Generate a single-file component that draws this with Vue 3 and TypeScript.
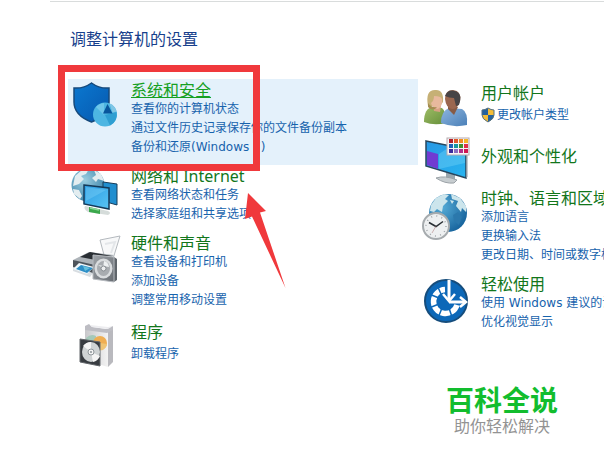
<script setup lang="ts">
interface Category {
  icon: string
  title: string
  links: string[]
  active?: boolean
  shield?: boolean
}

const columns: Category[][] = [
  [
    {
      icon: 'security',
      title: '系统和安全',
      links: ['查看你的计算机状态', '通过文件历史记录保存你的文件备份副本', '备份和还原(Windows 7)'],
      active: true,
    },
    { icon: 'network', title: '网络和 Internet', links: ['查看网络状态和任务', '选择家庭组和共享选项'] },
    { icon: 'hardware', title: '硬件和声音', links: ['查看设备和打印机', '添加设备', '调整常用移动设置'] },
    { icon: 'programs', title: '程序', links: ['卸载程序'] },
  ],
  [
    { icon: 'users', title: '用户帐户', links: ['更改帐户类型'], shield: true },
    { icon: 'display', title: '外观和个性化', links: [] },
    { icon: 'clock', title: '时钟、语言和区域', links: ['添加语言', '更换输入法', '更改日期、时间或数字格式'] },
    { icon: 'ease', title: '轻松使用', links: ['使用 Windows 建议的设置', '优化视觉显示'] },
  ],
]

const swatches: string[] = [
  '#b3202c', '#e0592a', '#f08a24', '#f5b526',
  '#1e62b8', '#1796a0', '#3f8f2c', '#e0304a',
  '#3b2a9c', '#8a6fc0', '#b0308c', '#d01850',
]
</script>

<template>
  <main class="page">
    <h1 class="heading">调整计算机的设置</h1>
    <div class="columns">
      <div v-for="(column, c) in columns" :key="c" class="column">
        <section
          v-for="item in column"
          :key="item.icon"
          class="category"
          :class="[item.icon, { active: item.active }]"
        >
          <svg v-if="item.icon === 'security'" class="icon" viewBox="0 0 48 48" aria-hidden="true">
            <defs>
              <linearGradient id="shieldFill" x1="0" y1="0" x2="1" y2="1">
                <stop offset="0" stop-color="#0a78d0" />
                <stop offset="1" stop-color="#0758ae" />
              </linearGradient>
            </defs>
            <path d="M20.500 1C26 5 31 6.500 38 6v14c0 9-7 16-17.500 20C10 36 3 29 3 20V6c7 .5 12-1 17.500-5z" fill="url(#shieldFill)" stroke="#164a7c" stroke-width="1.500" />
            <circle cx="34" cy="32.500" r="12" fill="#4db6e2" />
            <path d="M34 33 45.500 30A12 12 0 0 1 39 43.500z" fill="#2f9fd2" />
            <path d="M25 25a12 12 0 0 1 8-4v12z" fill="#6fc6ea" />
            <path d="M32 31.500 36.500 22l5 9.500z" fill="#08569c" />
            <path d="M38.500 21.500a12 12 0 0 1 7 8l-4 1z" fill="#80c6e5" />
          </svg>

          <svg v-else-if="item.icon === 'network'" class="icon" viewBox="0 0 48 48" aria-hidden="true">
            <defs>
              <radialGradient id="netGlobe" cx=".4" cy=".35" r=".7">
                <stop offset="0" stop-color="#9bcde0" />
                <stop offset="1" stop-color="#3a82a8" />
              </radialGradient>
              <linearGradient id="netScreen" x1="0" y1="0" x2="1" y2="1">
                <stop offset="0" stop-color="#2b9be2" />
                <stop offset="1" stop-color="#58c4f4" />
              </linearGradient>
            </defs>
            <circle cx="17" cy="17" r="16.500" fill="url(#netGlobe)" />
            <path d="M4 8l7-6 7-1-3 5-5 2 3 3-5 5-6 2zM23 2l7 4 3 7-6-2-2 3-4-4 4-3zM2 21l6 1 3 6-2 3-6-5z" fill="#e3edf0" />
            <path d="M32 14l14 2v21l-14-4z" fill="#208ecf" stroke="#173c59" />
            <path d="M13 17l25 3v21l-25-5z" fill="url(#netScreen)" stroke="#143a59" stroke-width="1.500" />
            <path d="M15 19l20 3-20 11z" fill="#7fd3f7" opacity=".4" />
            <path d="M14 38l23 5q4 2 0 4l-20-3q-5-3-3-6z" fill="#d5dcda" />
            <path d="M18 39l11 2.500v4.500l-11-2z" fill="#3ba84c" />
            <path d="M19 40l9 2" stroke="#8ed699" stroke-width="1.500" />
          </svg>

          <svg v-else-if="item.icon === 'hardware'" class="icon" viewBox="0 0 48 48" aria-hidden="true">
            <defs>
              <linearGradient id="speaker" x1="0" y1="0" x2="1" y2="1">
                <stop offset="0" stop-color="#9ea3a8" />
                <stop offset="1" stop-color="#686d73" />
              </linearGradient>
            </defs>
            <path d="M29 5 49 1 42 24 33 20z" fill="#f7f8f9" stroke="#b4b9be" />
            <path d="M34 9l10-2-4 11" fill="none" stroke="#e3e6e9" stroke-width="2" />
            <path d="M2 25 18 17 43 20 24 34z" fill="#aeb4b9" />
            <path d="M9 22 19 17l22 4-11 5z" fill="#292e33" />
            <path d="M2 25l22 5v9L2 33z" fill="#4d545b" />
            <path d="M2 32l20 6-3 4-17-6z" fill="#d8dde1" />
            <path d="M8 28l15 4-7 7-14-5z" fill="#eff7fb" />
            <path d="M10 30l12 3-6 5-11-4z" fill="#2d8ec6" />
            <path d="M12 31l7 2-5 3z" fill="#65c0dc" />
            <path d="M43 22l3 2v21l-3 2z" fill="#5f656b" />
            <path d="M22 20l21 2v25l-21-3z" fill="url(#speaker)" stroke="#b7bbc0" />
            <ellipse cx="32.500" cy="33.500" rx="9" ry="10" fill="#d9dcde" />
            <ellipse cx="32.500" cy="33.500" rx="6.500" ry="7.500" fill="#a8acb0" />
            <path d="M27 30l5 3 1-7a6 7 0 0 1 5 6z" fill="#edf0f1" />
            <circle cx="32.500" cy="33.500" r="2.500" fill="#eceeef" stroke="#868b90" />
          </svg>

          <svg v-else-if="item.icon === 'programs'" class="icon" viewBox="0 0 48 48" aria-hidden="true">
            <defs>
              <linearGradient id="box" x1="0" y1="0" x2="1" y2="0">
                <stop offset="0" stop-color="#c8c8cb" />
                <stop offset="1" stop-color="#f3f3f3" />
              </linearGradient>
            </defs>
            <path d="M14 4 37 7v36l-23-7z" fill="url(#box)" />
            <path d="M37 7l5-3v34l-5 5z" fill="#b9b9be" />
            <path d="M14 2l4-2 3 3 14 2 7-3v4l-6 3-22-3z" fill="#bdbdc3" />
            <path d="M19 1l18 2 5-1-5 3-16-2z" fill="#ededf0" />
            <path d="M15 14q5-5 10-2v7l-10-1z" fill="#a5c9b9" />
            <circle cx="29" cy="19" r="7" fill="#efae52" />
            <path d="M29 19l7 1a7 7 0 0 1-9 6z" fill="#efc475" />
            <path d="M9 15l20 3v24L9 38z" fill="#383c41" stroke="#62666b" />
            <ellipse cx="20" cy="28" rx="9" ry="10" fill="#cfd3d4" />
            <path d="M20 28l-8-6q3-4 8-4zM20 28l9 4q-2 5-7 6z" fill="#f5f5f5" />
            <circle cx="20" cy="28" r="3" fill="#f4f4f4" stroke="#90979b" />
            <circle cx="20" cy="28" r="1" fill="#8d9498" />
          </svg>

          <svg v-else-if="item.icon === 'users'" class="icon" viewBox="0 0 48 48" aria-hidden="true">
            <defs>
              <linearGradient id="greenShirt" x1="0" y1="0" x2="1" y2="1">
                <stop offset="0" stop-color="#9fbd67" />
                <stop offset="1" stop-color="#658f39" />
              </linearGradient>
              <linearGradient id="blueShirt" x1="0" y1="0" x2="1" y2="1">
                <stop offset="0" stop-color="#8db5de" />
                <stop offset="1" stop-color="#4b80b8" />
              </linearGradient>
            </defs>
            <path d="M2 37q0-14 9-15l9 1q5 4 4 15-12 3-22-1z" fill="url(#greenShirt)" />
            <path d="M11 20h8l-1 7-6-1z" fill="#d8a184" />
            <path d="M6 21Q3 5 13 5q9-1 8 12l-4 5z" fill="#c6b075" />
            <path d="M12 11q7 0 8 3 1 7-4 10-6-1-7-6 3-2 3-7z" fill="#e8b99d" />
            <path d="M6 18q3 5 9 4-4 5-9 0z" fill="#a48d51" />
            <path d="M19 38q0-12 8-15l13 1q6 3 5 16-14 3-26-2z" fill="url(#blueShirt)" />
            <path d="M26 20l10 2-4 8-6-6z" fill="#875b45" />
            <path d="M23 14q0-9 8-9 9 1 7 11-3 9-8 8-6-1-7-10z" fill="#9b674f" />
            <path d="M23 11q3-7 10-5 8 2 4 14l-3 1-2-8q-5 0-9-2z" fill="#484445" />
          </svg>

          <svg v-else-if="item.icon === 'display'" class="icon" viewBox="0 0 48 48" aria-hidden="true">
            <defs>
              <linearGradient id="monitor" x1="0" y1="0" x2="1" y2="1">
                <stop offset="0" stop-color="#2798e5" />
                <stop offset="1" stop-color="#28b4ef" />
              </linearGradient>
            </defs>
            <path d="M24 34l9 2v6l-9-2z" fill="#9ba7ae" />
            <path d="M14 40q9-3 21 2l-3 3q-9 1-18-5z" fill="#c7cdd0" stroke="#9ba2a7" />
            <path d="M4 3 44 11v29L4 28z" fill="url(#monitor)" stroke="#27465d" stroke-width="1.500" />
            <path d="M5 13l11 3v15L5 27z" fill="#703bd2" />
            <path d="M17 16l12-8 14 4v13L17 31z" fill="#6bd0f7" opacity=".45" />
            <path d="M44 11l1.500-1v29L44 40z" fill="#8b969f" />
            <rect x="25" y="0" width="22" height="17" fill="#f7f6f7" stroke="#b5aab0" />
            <rect
              v-for="(color, i) in swatches"
              :key="i"
              :x="27 + (i % 4) * 5"
              :y="1 + Math.floor(i / 4) * 5"
              width="4"
              height="4"
              :fill="color"
            />
          </svg>

          <svg v-else-if="item.icon === 'clock'" class="icon" viewBox="0 0 48 48" aria-hidden="true">
            <defs>
              <radialGradient id="globe" cx=".35" cy=".35" r=".75">
                <stop offset="0" stop-color="#55abd6" />
                <stop offset="1" stop-color="#14609a" />
              </radialGradient>
            </defs>
            <circle cx="26" cy="23" r="19" fill="url(#globe)" />
            <path d="M9 15l5-7 8-4 5 1-4 4 3 2-5 5-1 6-5-3-3 3-4-1zM29 4l9 4 6 8 0 6-4-4-1 4-5-6 2-5-6-2zM28 10l4 1-2 3z" fill="#cce5ec" />
            <path d="M31 25l5-3 4 5-3 8-5-4z" fill="#2b78ac" />
            <circle cx="14" cy="36" r="13" fill="#eef0f1" stroke="#a6abae" stroke-width="2" />
            <circle cx="14" cy="36" r="10" fill="none" stroke="#a0a5aa" stroke-width="1.500" stroke-dasharray="1 4.236" />
            <path d="M7 32.500l7 4 7-5" fill="none" stroke="#292e33" stroke-width="1.500" />
            <path d="M14 36l-4 7" stroke="#a66e6e" stroke-width=".5" />
          </svg>

          <svg v-else class="icon" viewBox="0 0 48 48" aria-hidden="true">
            <circle cx="24" cy="25" r="21" fill="#0c68b8" stroke="#164d7c" stroke-width="2" />
            <path d="M23 13.500A12 12 0 1 0 35 29" fill="none" stroke="#fff" stroke-width="5.500" />
            <path d="M15 9l4 9M7 18l10 4M7 32l10-4M16 42l4-10M30 41l-3-9" stroke="#0c68b8" stroke-width="1.500" />
            <path d="M27 5v18M27 25h14" stroke="#0c68b8" stroke-width="6" />
            <path d="M27 4v19M27 26h15" stroke="#fff" stroke-width="3" />
            <path d="M21 18l6 7 6-7M38 21l6 5-6 5" fill="none" stroke="#fff" stroke-width="2.500" />
          </svg>

          <div class="text">
            <h2 class="title"><a href="#">{{ item.title }}</a></h2>
            <ul v-if="item.links.length" class="links">
              <li v-for="link in item.links" :key="link">
                <svg v-if="item.shield" class="badge" viewBox="0 0 14 16" aria-hidden="true">
                  <path d="M7 1q3 2 6 2v5q0 4-6 7Q1 12 1 8V3q3 0 6-2z" fill="#f4bc37" />
                  <path d="M7 1v7H1V3q3 0 6-2zM7 8h6q0 4-6 7z" fill="#25629e" />
                  <path d="M7 1q3 2 6 2v5q0 4-6 7Q1 12 1 8V3q3 0 6-2z" fill="none" stroke="#526f83" />
                </svg>
                <a href="#">{{ link }}</a>
              </li>
            </ul>
          </div>
        </section>
      </div>
    </div>

    <div class="frame"></div>
    <svg class="arrow" viewBox="0 0 42 98" aria-hidden="true">
      <path d="M4 2 22 20 16 21.500 41.500 97 8 25.500 1 28z" fill="#f0393c" />
    </svg>

    <aside class="brand">
      <strong>百科全说</strong>
      <span>助你轻松解决</span>
    </aside>
  </main>
</template>

<style>
body {
  background: #fff;
}
</style>

<style scoped>
.page {
  position: relative;
  min-height: 100vh;
  box-sizing: border-box;
  padding: 1px 0 0 50px;
  overflow: hidden;
  font-family: "Noto Sans", "Noto Sans CJK SC", sans-serif;
  font-size: 12px;
  line-height: 19px;
  white-space: nowrap;
}

.heading {
  margin: 0;
  padding: 28px 20px 30px;
  border-top: 1px solid #d9dcdc;
  font-size: 16px;
  font-weight: 400;
  line-height: 19px;
  color: #173f8c;
}

.columns {
  display: grid;
  grid-template-columns: 350px minmax(0, 1fr);
  margin-left: 18px;
}

.column + .column {
  padding-top: 3px;
}

.category {
  display: flex;
  gap: 12px;
  padding: 1px 0 8px 3px;
}

.column + .column .category {
  padding-left: 4px;
  gap: 11px;
}

.category.active {
  background: #e4f1fb;
}

.category.programs {
  margin-top: 3px;
}

.programs .links {
  margin-top: 3px;
}

.category.display {
  padding-bottom: 1px;
}

.display .text {
  padding-top: 10px;
}

.icon {
  flex: none;
  width: 48px;
  height: 48px;
  margin: 2px 0 0;
  overflow: visible;
}

.category:not(.display) .icon {
  margin-bottom: -8px;
}

.title {
  margin: 0;
  font-size: 16px;
  font-weight: 400;
  line-height: 20px;
}

.title a {
  color: #12761b;
  text-decoration: none;
}

.active .title a {
  color: #16a022;
  text-decoration: underline;
}

.links {
  margin: 0;
  padding: 0;
  list-style: none;
  font-family: "DejaVu Sans", "Noto Sans CJK SC", sans-serif;
}

.links li {
  display: flex;
  align-items: center;
}

.links a {
  color: #1763ad;
  text-decoration: none;
}

.users .links {
  line-height: 24px;
}

.badge {
  width: 14px;
  height: 16px;
  margin-right: 2px;
}

.frame {
  position: absolute;
  top: 65px;
  left: 58px;
  box-sizing: border-box;
  width: 202px;
  height: 106px;
  border: 7px solid #f0393c;
}

.arrow {
  position: absolute;
  top: 191px;
  left: 244px;
  width: 42px;
  height: 98px;
}

.brand {
  position: absolute;
  right: 46px;
  bottom: 31px;
  display: flex;
  flex-direction: column;
  align-items: center;
}

.brand strong {
  font-size: 28px;
  font-weight: 700;
  line-height: 32px;
  color: #12bd2e;
}

.brand span {
  font-size: 16px;
  line-height: 20px;
  color: #939393;
}
</style>
